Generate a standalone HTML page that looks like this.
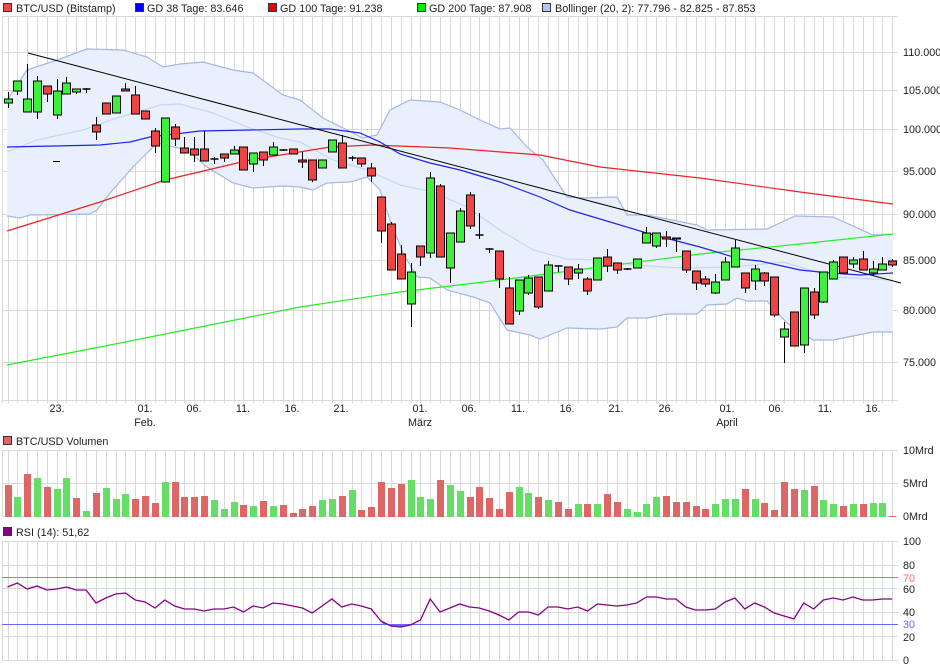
<!DOCTYPE html>
<html><head><meta charset="utf-8"><style>
html,body{margin:0;padding:0;background:#fff;width:940px;height:670px;overflow:hidden}
svg{display:block}
text{font-family:"Liberation Sans",sans-serif;font-size:10.8px;fill:#222}
</style></head><body>
<svg id="s" width="940" height="670" viewBox="0 0 940 670" xmlns="http://www.w3.org/2000/svg">
<g id="grid"></g>
<g id="band"></g>
<g id="lines"></g>
<g id="candles"></g>
<g id="vol"></g>
<g id="rsi"></g>
<rect x="3.5" y="3.5" width="8" height="8" fill="#f04848" stroke="#333"/>
<text x="16" y="12">BTC/USD (Bitstamp)</text>
<rect x="135.5" y="3.5" width="8" height="8" fill="#0000ee" stroke="#333"/>
<text x="147" y="12">GD 38 Tage: 83.646</text>
<rect x="268.5" y="3.5" width="8" height="8" fill="#ee0000" stroke="#333"/>
<text x="280" y="12">GD 100 Tage: 91.238</text>
<rect x="417.5" y="3.5" width="8" height="8" fill="#00ee00" stroke="#333"/>
<text x="429" y="12">GD 200 Tage: 87.908</text>
<rect x="542.5" y="3.5" width="8" height="8" fill="#b4c8ee" stroke="#333"/>
<text x="555" y="12">Bollinger (20, 2): 77.796 - 82.825 - 87.853</text>
<g>
<text x="903" y="56">110.000</text>
<text x="903" y="94">105.000</text>
<text x="903" y="133">100.000</text>
<text x="903" y="175">95.000</text>
<text x="903" y="218">90.000</text>
<text x="903" y="264">85.000</text>
<text x="903" y="314">80.000</text>
<text x="903" y="366">75.000</text>
</g>
<g text-anchor="middle">
<text x="57" y="412">23.</text>
<text x="145" y="412">01.</text><text x="145" y="426">Feb.</text>
<text x="194" y="412">06.</text>
<text x="243" y="412">11.</text>
<text x="292" y="412">16.</text>
<text x="341" y="412">21.</text>
<text x="420" y="412">01.</text><text x="420" y="426">März</text>
<text x="469" y="412">06.</text>
<text x="518" y="412">11.</text>
<text x="567" y="412">16.</text>
<text x="616" y="412">21.</text>
<text x="666" y="412">26.</text>
<text x="727" y="412">01.</text><text x="727" y="426">April</text>
<text x="776" y="412">06.</text>
<text x="825" y="412">11.</text>
<text x="873" y="412">16.</text>
</g>
<rect x="3.5" y="436.5" width="8" height="8" fill="#dd6666" stroke="#333"/>
<text x="16" y="445">BTC/USD Volumen</text>
<text x="903" y="454">10Mrd</text>
<text x="903" y="487">5Mrd</text>
<text x="903" y="520">0Mrd</text>
<rect x="3.5" y="527.5" width="8" height="8" fill="#880088" stroke="#333"/>
<text x="16" y="536">RSI (14): 51,62</text>
<text x="903" y="545">100</text>
<text x="903" y="569">80</text>
<text x="903" y="582" style="fill:#ff6666">70</text>
<text x="903" y="593">60</text>
<text x="903" y="616">40</text>
<text x="903" y="628" style="fill:#6666ff">30</text>
<text x="903" y="641">20</text>
<text x="903" y="664">0</text>
</svg>
<script>
var NS="http://www.w3.org/2000/svg";
function el(p,t,a){var e=document.createElementNS(NS,t);for(var k in a)e.setAttribute(k,a[k]);document.getElementById(p).appendChild(e);return e;}
function X(i){return 7.5+i*9.83;}
var G="#d9d9d9";
function vgrid(y1,y2){el("grid","line",{x1:2.5,x2:2.5,y1:y1,y2:y2,stroke:G});for(var i=0;i<=91;i++){var x=Math.round(X(i))+0.5;if(x>898)break;el("grid","line",{x1:x,x2:x,y1:y1,y2:y2,stroke:G});}}
vgrid(16,403);vgrid(450,517);vgrid(541,661);
[16,52,90,129,171,214,260,310,362,400].forEach(function(y){el("grid","line",{x1:2,x2:898,y1:y+.5,y2:y+.5,stroke:G});});
[450,483,516].forEach(function(y){el("grid","line",{x1:2,x2:898,y1:y+.5,y2:y+.5,stroke:G});});
[541,565,588,612,636,660].forEach(function(y){el("grid","line",{x1:2,x2:898,y1:y+.5,y2:y+.5,stroke:G});});
function pts(a){return a.map(function(p){return p[0]+","+p[1];}).join(" ");}
var up=[[7,100],[27,70],[57,60],[87,49],[123,50],[147,57],[163,67],[180,64],[203,62],[233,70],[253,73],[283,95],[300,100],[323,118],[343,128],[363,138],[377,135],[390,110],[410,100],[440,102],[460,110],[480,120],[500,129],[510,128],[527,147],[543,160],[567,197],[583,198],[617,197],[627,215],[647,215],[697,225],[707,230],[767,229],[795,216],[833,217],[873,235],[893,234]];
var lo=[[7,216],[20,218],[30,215],[90,214],[97,210],[110,193],[133,167],[157,143],[187,150],[207,167],[233,183],[253,188],[283,186],[300,187],[313,190],[327,183],[350,182],[367,177],[380,190],[390,220],[403,253],[417,277],[430,278],[447,290],[473,297],[490,303],[507,330],[530,335],[540,339],[567,328],[600,329],[617,327],[627,318],[647,318],[667,314],[697,314],[707,305],[727,304],[737,298],[747,301],[767,301],[787,323],[813,340],[833,340],[873,332],[893,332]];
el("band","polygon",{points:pts(up)+" "+pts(lo.slice().reverse()),fill:"#e9f0fc"});
el("band","polyline",{points:pts(up),fill:"none",stroke:"#a4b8e2","stroke-width":1.2});
el("band","polyline",{points:pts(lo),fill:"none",stroke:"#a4b8e2","stroke-width":1.2});
var mid=[[7,152],[37,140],[83,130],[117,118],[160,105],[180,104],[213,113],[247,127],[280,138],[300,142],[333,160],[367,170],[400,185],[433,192],[467,207],[500,230],[533,250],[567,259],[600,260],[633,265],[683,268],[733,267],[783,262],[833,277],[893,280]];
el("lines","polyline",{points:pts(mid),fill:"none",stroke:"#c4d6f6","stroke-width":1.2});
el("lines","polyline",{points:pts([[7,365],[100,347],[200,327],[300,307],[400,292],[500,280],[600,267],[700,254],[800,244],[893,234]]),fill:"none",stroke:"#22ee22","stroke-width":1.2});
el("lines","polyline",{points:pts([[7,231],[100,202],[165,180],[250,160],[330,147],[372,145],[450,148],[540,155],[600,167],[700,178],[800,192],[893,204]]),fill:"none",stroke:"#ee2222","stroke-width":1.2});
el("lines","polyline",{points:pts([[7,147],[100,145],[130,142],[150,137],[200,131],[250,130],[300,129],[330,129],[360,133],[380,142],[400,154],[430,163],[460,170],[500,182],[540,197],[570,210],[600,219],[650,234],[700,247],[740,259],[760,261],[800,270],[830,273],[860,275],[893,273]]),fill:"none",stroke:"#2222ee","stroke-width":1.2});
el("lines","line",{x1:28,y1:53,x2:901,y2:283,stroke:"#000","stroke-width":1});
var C=[[99,103,92,108,'g'],[81,91,81,95,'g'],[99,112,64,112,'g'],[81,112,76,119,'g'],[86,94,86,102,'r'],[91,115,79,119,'g'],[83,94,77,94,'g'],[89,92,89,94,'g'],[88.5,89.5,88,93,'d'],
[125,132,117,140,'r'],[103,114,103,114,'r'],[96,113,96,113,'g'],[89,91,83,91,'r'],[95,114,86,114,'r'],[111,119,111,119,'r'],[131,146,128,153,'r'],[118,182,118,182,'g'],[127,139,124,146,'r'],[148,153,137,153,'r'],[149,155,137,162,'r'],[149,161,131,161,'r'],[158.5,159.5,157,164,'d'],[154,158,154,162,'r'],[150,154,146,154,'g'],[147,170,147,170,'r'],[153,164,153,172,'g'],[152,160,152,166,'r'],[147,155,142,155,'g'],[149.5,150.5,149,151,'d'],[149,154,149,154,'r'],
[160,162,152,168,'r'],[160,180,160,182,'r'],[160,168,160,168,'g'],[140,152,140,152,'g'],[143,168,135,168,'r'],[157.5,158.5,156,161,'d'],[158,164,158,167,'r'],[168,176,163,182,'r'],[197,231,197,243,'r'],[224,270,222,270,'r'],[254,279,245,279,'r'],[272,304,263,327,'g'],[246,257,246,266,'r'],[178,253,172,258,'g'],[186,257,184,257,'r'],[233,268,233,283,'g'],[211,242,208,242,'g'],[195,226,192,229,'r'],[234.5,235.5,213,239,'d'],[248.5,249.5,248,253,'d'],
[251,279,251,288,'r'],[288,324,277,324,'r'],[280,311,280,315,'g'],[278,293,275,295,'g'],[277,307,277,309,'r'],[265,291,261,291,'g'],[265.5,266.5,265,272,'d'],[267,279,267,285,'r'],[269,273,264,279,'g'],[279,291,277,295,'r'],[258,280,258,280,'g'],[257,266,249,272,'r'],[263,270,263,274,'r'],[268.5,269.5,268,270,'d'],[259,268,259,268,'g'],[233,243,227,243,'g'],[233,246,233,248,'g'],[237,239,231,247,'r'],[238,239,238,252,'r'],[251,270,251,273,'r'],
[271,283,271,290,'r'],[279,284,276,287,'r'],[282,293,274,294,'g'],[262,280,257,280,'g'],[248,267,240,267,'g'],[273,288,273,293,'r'],[269,281,265,290,'g'],[273,281,272,286,'r'],[277,315,277,317,'r'],[329,337,322,363,'g'],[312,346,312,346,'r'],[288,345,288,353,'g'],[292,315,288,319,'r'],[272,302,272,303,'g'],[262,279,260,279,'g'],[257,273,257,273,'r'],[260,264,257,268,'g'],[259,270,251,270,'r'],[269,273,261,276,'g'],[264,270,257,270,'g'],[261,265,259,267,'r']];
C.forEach(function(c,i){var x=Math.round(X(i))+0.5;
 el("candles","line",{x1:x,x2:x,y1:c[2],y2:c[3],stroke:"#000"});
 if(c[4]=='d'){el("candles","line",{x1:x-4,x2:x+4,y1:(c[0]+c[1])/2,y2:(c[0]+c[1])/2,stroke:"#000","stroke-width":1.5});}
 else el("candles","rect",{x:x-4,y:c[0],width:8,height:Math.max(1,c[1]-c[0]),fill:c[4]=='g'?"#3cf03c":"#f04444",stroke:"#000","stroke-width":1});
});
el("candles","line",{x1:53,x2:60,y1:161.5,y2:161.5,stroke:"#000"});
var V=[[485,'r'],[497,'g'],[474,'r'],[478,'g'],[487,'r'],[489,'g'],[478,'g'],[498,'r'],[511,'g'],[493,'r'],[488,'g'],[499,'g'],[494,'g'],[499,'r'],[496,'r'],[503,'r'],[482,'g'],[482,'r'],[497,'r'],[497,'r'],[496,'r'],[500,'g'],[509,'g'],[502,'g'],[505,'r'],[506,'g'],[501,'r'],[506,'g'],[505,'r'],[513,'r'],[509,'r'],[506,'r'],[500,'g'],[499,'g'],[496,'r'],[490,'g'],[510,'r'],[507,'r'],[482,'r'],[488,'r'],[484,'r'],[480,'g'],[497,'g'],[499,'g'],[480,'r'],[485,'g'],[491,'g'],
[497,'r'],[487,'r'],[498,'r'],[509,'r'],[492,'r'],[487,'g'],[493,'g'],[497,'r'],[500,'g'],[502,'r'],[509,'r'],[504,'g'],[504,'r'],[504,'g'],[494,'r'],[502,'r'],[509,'g'],[512,'g'],[504,'g'],[497,'g'],[496,'r'],[502,'r'],[502,'r'],[506,'r'],
[509,'r'],[504,'g'],[499,'g'],[499,'g'],[489,'r'],[499,'g'],[503,'r'],[510,'r'],[482,'r'],[489,'r'],[490,'g'],[486,'r'],[500,'g'],[504,'g'],[506,'r'],[504,'g'],[504,'r'],[503,'g'],[503,'g'],[516,'r']];
V.forEach(function(v,i){var x=Math.round(X(i))-3;el("vol","rect",{x:x,y:v[0],width:7,height:517-v[0],fill:v[1]=='g'?"#66dd66":"#dd6666"});});
el("rsi","line",{x1:2,x2:898,y1:577.5,y2:577.5,stroke:"#e86a6a"});
el("rsi","line",{x1:2,x2:898,y1:624.5,y2:624.5,stroke:"#6666ff"});
var R=[587,583,589,586,590,589,587,590,590,603,598,594,593,600,602,608,600,606,609,609,611,609,609,607,612,606,608,603,604,606,608,613,606,599,607,604,606,609,621,626,627,625,620,599,612,608,604,607,608,611,615,620,612,612,615,607,607,609,607,611,604,605,606,605,603,597,597,599,599,607,610,610,609,602,598,609,603,607,613,616,619,603,609,600,598,600,597,600,600,599,599];
var rp=R.map(function(y,i){return [X(i).toFixed(1),y];});
el("rsi","polygon",{points:"383,624 "+X(38).toFixed(1)+",621 "+X(39).toFixed(1)+",626 "+X(40).toFixed(1)+",627 "+X(41).toFixed(1)+",625 421,624",fill:"#6666ff"});
el("rsi","polyline",{points:pts(rp),fill:"none",stroke:"#880088","stroke-width":1.3});
</script>
</body></html>
